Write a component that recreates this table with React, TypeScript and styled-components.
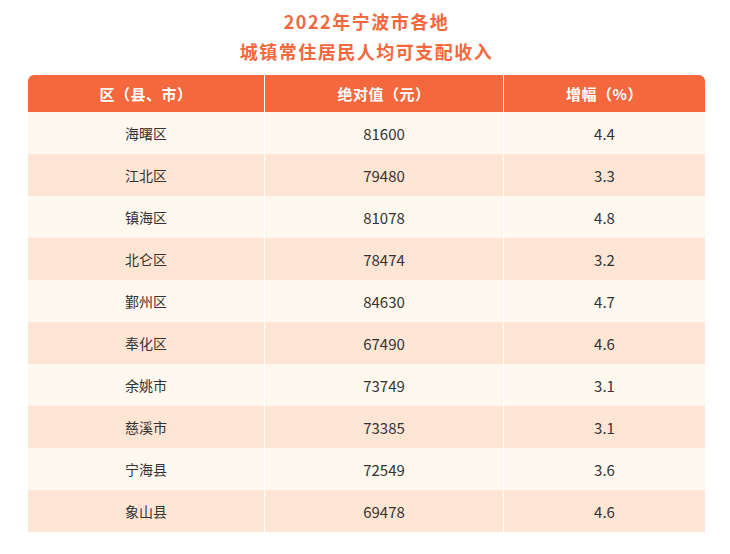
import styled, { createGlobalStyle } from "styled-components";

const GlobalStyle = createGlobalStyle`
    body {
        margin: 0;
        background: #ffffff;
        font-family: "Microsoft YaHei", "Noto Sans CJK SC", "Noto Sans", sans-serif;
    }
`;

const rows = [
    {area: "海曙区", income: "81600", growth: "4.4"},
    {area: "江北区", income: "79480", growth: "3.3"},
    {area: "镇海区", income: "81078", growth: "4.8"},
    {area: "北仑区", income: "78474", growth: "3.2"},
    {area: "鄞州区", income: "84630", growth: "4.7"},
    {area: "奉化区", income: "67490", growth: "4.6"},
    {area: "余姚市", income: "73749", growth: "3.1"},
    {area: "慈溪市", income: "73385", growth: "3.1"},
    {area: "宁海县", income: "72549", growth: "3.6"},
    {area: "象山县", income: "69478", growth: "4.6"},
];

export default function App() {
    return (
        <>
            <GlobalStyle/>
            <Page>
                <Title>
                    <span>2022年宁波市各地</span>
                    <span>城镇常住居民人均可支配收入</span>
                </Title>

                <Table>
                    <colgroup>
                        <col style={{width: 237}}/>
                        <col style={{width: 239}}/>
                        <col style={{width: 201}}/>
                    </colgroup>
                    <thead>
                        <tr>
                            <HeadCell>区（县、市）</HeadCell>
                            <HeadCell>绝对值（元）</HeadCell>
                            <HeadCell>增幅（%）</HeadCell>
                        </tr>
                    </thead>
                    <tbody>
                        {rows.map((row, i) => (
                            <Row key={row.area} $odd={i % 2 === 1}>
                                <Cell>{row.area}</Cell>
                                <Cell $num>{row.income}</Cell>
                                <Cell $num>{row.growth}</Cell>
                            </Row>
                        ))}
                    </tbody>
                </Table>
            </Page>
        </>
    );
}

const Page = styled.div`
    width: 730px;
    padding: 6px 25px 0 28px;
    box-sizing: border-box;
`;

const Title = styled.h1`
    margin: 0 0 9px;
    display: flex;
    flex-direction: column;
    align-items: center;
    color: #f4683d;
    font-size: 18px;
    font-weight: 700;
    line-height: 30px;
    letter-spacing: 1.5px;
`;

const Table = styled.table`
    width: 677px;
    border-collapse: separate;
    border-spacing: 0;
    table-layout: fixed;
`;

const HeadCell = styled.th`
    height: 37px;
    padding: 0;
    background: #f5683d;
    color: #ffffff;
    font-size: 15px;
    font-weight: 700;
    letter-spacing: 0.5px;
    text-align: center;
    border-right: 1px solid #ffffff;

    &:first-child {
        border-top-left-radius: 6px;
    }

    &:last-child {
        border-right: none;
        border-top-right-radius: 6px;
    }
`;

const Row = styled.tr<{ $odd: boolean }>`
    background: ${({$odd}) => ($odd ? "#ffe6d4" : "#fff8ee")};
`;

const Cell = styled.td<{ $num?: boolean }>`
    height: 42px;
    padding: 0;
    color: #333333;
    font-size: ${({$num}) => ($num ? "15px" : "14px")};
    text-align: center;
    border-right: 1px solid #ffffff;

    &:last-child {
        border-right: none;
    }
`;
